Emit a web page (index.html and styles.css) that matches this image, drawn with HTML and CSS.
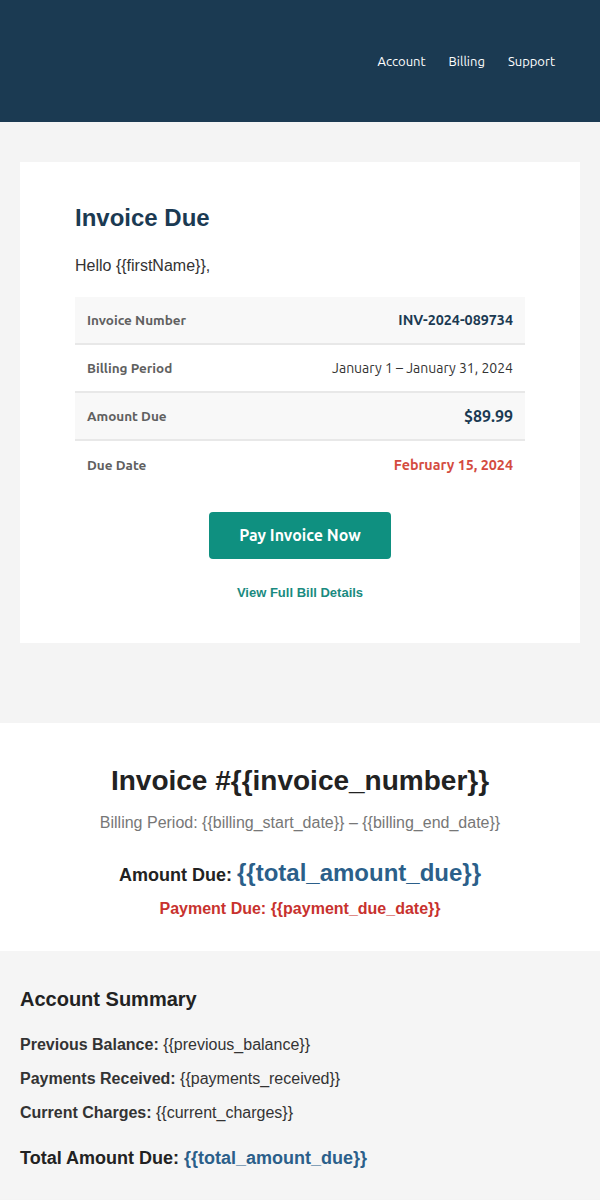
FILE: index.html
```html
<!DOCTYPE html>
<html>
<head>
<meta charset="utf-8">
<link rel="stylesheet" href="styles.css">
</head>
<body>
<header class="topbar">
  <nav class="nav">
    <a href="#">Account</a>
    <a href="#">Billing</a>
    <a href="#">Support</a>
  </nav>
</header>
<main class="wrap">
  <section class="card">
    <h1 class="card-title">Invoice Due</h1>
    <p class="hello">Hello {{firstName}},</p>
    <div class="table">
      <div class="row shade"><span class="label">Invoice Number</span><span class="val strong">INV-2024-089734</span></div>
      <div class="row"><span class="label">Billing Period</span><span class="val">January 1 – January 31, 2024</span></div>
      <div class="row shade"><span class="label">Amount Due</span><span class="val strong big">$89.99</span></div>
      <div class="row last"><span class="label">Due Date</span><span class="val strong red">February 15, 2024</span></div>
    </div>
    <div class="actions">
      <a class="btn" href="#">Pay Invoice Now</a>
      <a class="link" href="#">View Full Bill Details</a>
    </div>
  </section>
</main>
<section class="invoice">
  <h2 class="inv-title">Invoice #{{invoice_number}}</h2>
  <p class="period">Billing Period: {{billing_start_date}} – {{billing_end_date}}</p>
  <p class="amount">Amount Due: <span class="amount-val">{{total_amount_due}}</span></p>
  <p class="pay-due">Payment Due: {{payment_due_date}}</p>
</section>
<section class="summary">
  <h3 class="sum-title">Account Summary</h3>
  <p class="sum-row"><b>Previous Balance:</b> {{previous_balance}}</p>
  <p class="sum-row"><b>Payments Received:</b> {{payments_received}}</p>
  <p class="sum-row"><b>Current Charges:</b> {{current_charges}}</p>
  <p class="sum-total">Total Amount Due: <span class="total-val">{{total_amount_due}}</span></p>
</section>
</body>
</html>
```
FILE: styles.css
```css
* { box-sizing: border-box; }
body {
  margin: 0;
  background: #f4f4f4;
  font-family: "Liberation Sans", Arial, sans-serif;
  color: #333;
}
.topbar {
  background: #1b3a52;
  height: 122px;
  display: flex;
  align-items: center;
  justify-content: flex-end;
  padding-right: 45px;
}
.nav {
  display: flex;
  gap: 23px;
  font-family: Ubuntu, "Open Sans", "Noto Sans", sans-serif;
  font-size: 13px;
}
.nav a {
  color: #fff;
  text-decoration: none;
}
.wrap {
  padding: 40px 20px 80px;
}
.card {
  background: #fff;
  padding: 40px 55px 43px;
}
.card-title {
  margin: 0;
  font-size: 24px;
  line-height: 32px;
  color: #1b3a52;
  font-weight: bold;
}
.hello {
  margin: 22px 0 21px;
  font-size: 16px;
  line-height: 20px;
  color: #333;
}
.table {
  font-family: Ubuntu, "Open Sans", "Noto Sans", sans-serif;
  font-size: 14px;
}
.row {
  display: flex;
  justify-content: space-between;
  align-items: center;
  height: 48px;
  padding: 0 12px;
  border-bottom: 2px solid #e8e8e8;
}
.row.last { border-bottom: none; }
.row.shade { background: #f8f8f8; }
.label {
  font-weight: bold;
  color: #606060;
  font-size: 13.5px;
}
.val {
  color: #333;
  font-size: 14px;
}
.val.strong { font-weight: bold; color: #1b3a52; font-size: 14.3px; }
.val.big { font-size: 16px; }
.val.red { color: #d44b3f; }
.actions {
  display: flex;
  flex-direction: column;
  align-items: center;
  margin-top: 23px;
}
.btn {
  display: block;
  width: 182px;
  height: 47px;
  line-height: 47px;
  text-align: center;
  background: #0f9080;
  color: #fff;
  border-radius: 4px;
  text-decoration: none;
  font-family: Ubuntu, "Open Sans", "Noto Sans", sans-serif;
  font-weight: bold;
  font-size: 16px;
}
.link {
  margin-top: 26px;
  color: #1a8a80;
  font-weight: bold;
  font-size: 13px;
  text-decoration: none;
}
.invoice {
  background: #fff;
  text-align: center;
  padding: 40px 20px 33px;
}
.inv-title {
  margin: 0;
  font-size: 28px;
  line-height: 36px;
  color: #222;
}
.period {
  margin: 15px 0 0;
  font-size: 16px;
  color: #777;
}
.amount {
  margin: 27px 0 0;
  font-size: 18px;
  font-weight: bold;
  color: #222;
}
.amount-val {
  font-size: 24px;
  color: #2b5f8a;
}
.pay-due {
  margin: 13px 0 0;
  font-size: 16px;
  font-weight: bold;
  color: #c8322e;
}
.summary {
  background: #f5f5f5;
  padding: 37px 20px 30px;
}
.sum-title {
  margin: 0 0 23px;
  font-size: 20px;
  color: #222;
}
.sum-row {
  margin: 0 0 12px;
  font-size: 16px;
  line-height: 22px;
  color: #333;
}
.sum-total {
  margin: 24px 0 0;
  font-size: 18px;
  font-weight: bold;
  color: #222;
}
.total-val { color: #2b5f8a; }
```
